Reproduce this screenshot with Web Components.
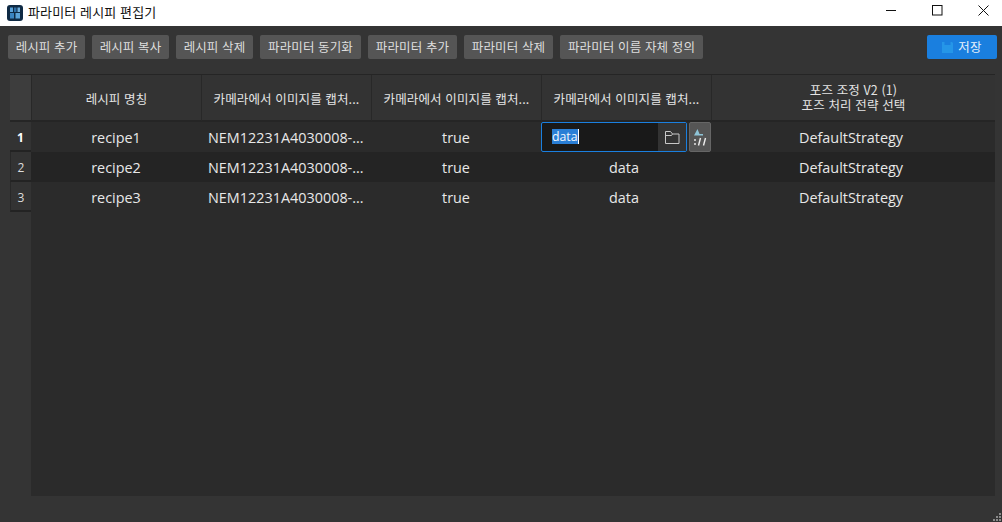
<!DOCTYPE html>
<html lang="ko"><head><meta charset="utf-8"><style>
html,body{margin:0;height:100%;background:#343434;overflow:hidden}
body{font-family:"Noto Sans","Noto Sans CJK KR",sans-serif}
</style></head><body>
<app-window>
<title-bar slot="title">파라미터 레시피 편집기</title-bar>
<tool-bar slot="tools">
<tool-button style="width:77px">레시피 추가</tool-button>
<tool-button style="width:77px">레시피 복사</tool-button>
<tool-button style="width:77px">레시피 삭제</tool-button>
<tool-button style="width:101px">파라미터 동기화</tool-button>
<tool-button style="width:89px">파라미터 추가</tool-button>
<tool-button style="width:89px">파라미터 삭제</tool-button>
<tool-button style="width:143px">파라미터 이름 자체 정의</tool-button>
<save-button>저장</save-button>
</tool-bar>
<recipe-table slot="table"></recipe-table>
</app-window>
<script>
const def=(n,css,html,init)=>customElements.define(n,class extends HTMLElement{constructor(){super();this.attachShadow({mode:'open'}).innerHTML=`<style>${css}</style>${html}`;init&&init(this)}});
const KR='"Noto Sans CJK KR","Noto Sans",sans-serif';
def('app-window',`:host{display:flex;flex-direction:column;width:1002px;height:522px;background:#343434;position:relative;overflow:hidden}
.grip{position:absolute;right:1px;bottom:1px}`,
`<slot name="title"></slot><slot name="tools"></slot><slot name="table"></slot>
<svg class="grip" width="9" height="9" fill="#8a8a8a"><rect x="7" y="1" width="2" height="2"/><rect x="4" y="4" width="2" height="2"/><rect x="7" y="4" width="2" height="2"/><rect x="1" y="7" width="2" height="2"/><rect x="4" y="7" width="2" height="2"/><rect x="7" y="7" width="2" height="2"/></svg>`);
def('title-bar',`:host{display:flex;align-items:center;height:26px;background:#fff;color:#111;font:13px/16px ${KR};flex:none}
.logo{margin-left:7px;margin-right:5px;flex:none}
.t{flex:1;position:relative;top:-1px;letter-spacing:.12px}
.w{display:flex;align-items:center;justify-content:center;width:46px;height:20px;margin-top:-5px}`,
`<svg class="logo" width="16" height="18" viewBox="0 0 16 18"><rect width="16" height="16" y="1" rx="3" fill="#0f2a44"/><rect x="3" y="3.500" width="3" height="4.500" fill="#5aa2da"/><rect x="7" y="3.500" width="2.500" height="4.500" fill="#2f6fa6"/><rect x="10.500" y="3.500" width="2.500" height="4.500" fill="#6fb0e0"/><rect x="3" y="9" width="4" height="5.500" fill="#3a84c0"/><rect x="8.500" y="9" width="4.500" height="5.500" fill="#5ba3d8"/></svg>
<span class="t"><slot></slot></span>
<span class="w"><svg width="10" height="2"><rect width="10" height="1" fill="#111"/></svg></span>
<span class="w"><svg width="11" height="11"><rect x=".5" y=".5" width="9.500" height="9.500" fill="none" stroke="#111"/></svg></span>
<span class="w" style="margin-right:-4px"><svg width="11" height="11"><path d="M.5.5l10 10M10.500.5l-10 10" stroke="#111" fill="none"/></svg></span>`);
def('tool-bar',`:host{display:flex;gap:7px;padding:9px 5px 0 8px;height:24px;flex:none}
::slotted(save-button){margin-left:auto}`,`<slot></slot>`);
def('tool-button',`:host{display:flex;align-items:center;justify-content:center;height:24px;background:#555;border-radius:2px;color:#dedede;font:12.5px/16px ${KR};letter-spacing:.12px;white-space:nowrap}`,`<slot></slot>`);
def('save-button',`:host{display:flex;align-items:center;justify-content:center;gap:5px;width:70px;height:24px;background:#1a7fdf;border-radius:2px;color:#e6f1fb;font:12.5px/16px ${KR};letter-spacing:.2px}
svg{flex:none}`,`<svg width="11" height="11" viewBox="0 0 11 11"><path d="M0 0h2.500v3h6V0H10l1 1v10H0z" fill="#2596e8"/></svg><slot></slot>`);
def('recipe-table',`:host{display:grid;grid-template-columns:21px 170px 170px 170px 170px 284px;grid-template-rows:47px 30px 30px 30px 1fr;margin:15px 0 26px 10px;width:985px;flex:1;min-height:0;box-sizing:border-box;border-top:1px solid #252525;color:#e8e8e8;font:14.4px/20px "Open Sans","Noto Sans",sans-serif}
.h{display:flex;align-items:center;justify-content:center;text-align:center;background:#333;border-bottom:2px solid #252525;border-left:1px solid #282828;color:#e4e4e4;font:12.5px/15px ${KR};letter-spacing:.12px;box-sizing:border-box;padding-top:1px}
.h.two{padding-top:0;padding-bottom:1px}
.corner{background:#3d3d3d;border-left:0}
.n{display:flex;align-items:center;justify-content:center;background:#333;border-bottom:2px solid #232323;border-left:1px solid #282828;font:12px/16px "Open Sans",sans-serif;color:#ddd;box-sizing:border-box;padding-top:4px}
.n.a{font-weight:700;color:#fff;border-left:0}
.c{display:flex;align-items:center;justify-content:center;background:#2b2b2b;min-width:0;white-space:nowrap;overflow:hidden;padding-top:2px;box-sizing:border-box}
.alt{background:#242424}
.l{justify-content:flex-start;padding-left:7px}
.lastc{padding-right:4px}
.dc{padding-right:4px}
.ed{overflow:visible;justify-content:flex-start;gap:2px;padding-top:0}
.rest{background:#2b2b2b;grid-column:2/7}
.gut{background:#343434}
.box{display:flex;width:146px;height:30px;box-sizing:border-box;border:1px solid #1a7fdf;border-radius:2px;background:#191919;flex:none;overflow:hidden}
.in{flex:1;padding-left:10px;display:flex;align-items:center;font-size:12.3px}
.sel{background:#2a7fd6;color:#f2f7fc;line-height:15px;border-right:1px solid #fff;position:relative;top:-1px}
.fo{width:28px;background:#333;display:flex;align-items:center;justify-content:center}
.url{width:22px;height:30px;flex:none;box-sizing:border-box;border:1px solid #666;border-radius:2px;background:#555;display:flex;align-items:center;justify-content:center}`,
`<div class="h corner"></div>
<div class="h">레시피 명칭</div><div class="h">카메라에서 이미지를 캡처...</div><div class="h">카메라에서 이미지를 캡처...</div><div class="h">카메라에서 이미지를 캡처...</div><div class="h two">포즈 조정 V2 (1)<br>포즈 처리 전략 선택</div>
<div class="n a">1</div><div class="c">recipe1</div><div class="c l">NEM12231A4030008-...</div><div class="c">true</div>
<div class="c ed"><div class="box"><div class="in"><span class="sel">data</span></div><div class="fo"><svg width="15" height="14" viewBox="0 0 15 14" fill="none" stroke="#c8c8c8"><path d="M.5 13.500v-12h5l2 2.500h6.500v9.500z"/><path d="M.5 5.500h6l1-1.500"/></svg></div></div>
<div class="url"><svg width="14" height="18" viewBox="0 0 14 18"><path d="M1 7.500h9v-1.500H6.500L4.500 1z" fill="#8ec3d6"/><g stroke="#ececec" stroke-width="1.400" fill="none"><path d="M7.500 10l-2 7.500M12.500 10l-2 7.500"/><path d="M2 11v2M2 15v2"/></g></svg></div></div>
<div class="c lastc">DefaultStrategy</div>
<div class="n">2</div><div class="c alt">recipe2</div><div class="c alt l">NEM12231A4030008-...</div><div class="c alt">true</div><div class="c alt dc">data</div><div class="c alt lastc">DefaultStrategy</div>
<div class="n">3</div><div class="c">recipe3</div><div class="c l">NEM12231A4030008-...</div><div class="c">true</div><div class="c dc">data</div><div class="c lastc">DefaultStrategy</div>
<div class="gut"></div><div class="rest"></div>`);
</script>
</body></html>
